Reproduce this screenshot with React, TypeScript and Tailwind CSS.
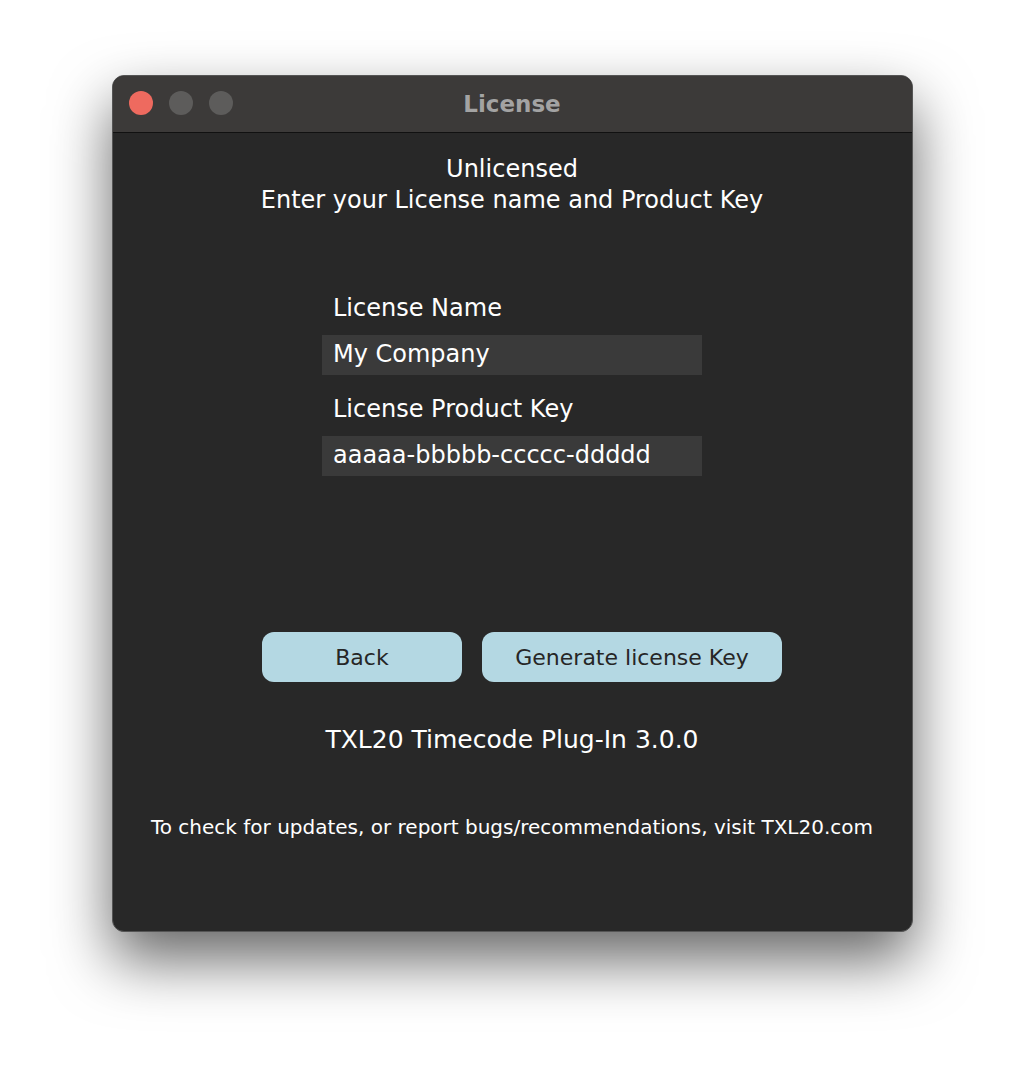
import React from 'react';

const font = { fontFamily: '"DejaVu Sans", "Noto Sans", sans-serif' };

const App = () => {
  return (
    <div className="w-[1024px] h-[1080px] bg-white flex justify-center pt-[75px]" style={font}>
      <div className="w-[801px] h-[857px] rounded-[12px] bg-[#282828] border border-[#555] shadow-[0_28px_60px_rgba(0,0,0,0.6)] overflow-hidden flex flex-col">
        {/* title bar */}
        <div className="relative h-[57px] bg-[#3c3a39] border-b border-[#111] flex items-center justify-center shrink-0">
          <div className="absolute left-[16px] top-[15px] flex gap-[16px]">
            <span className="w-[24px] h-[24px] rounded-full bg-[#ee6a5f]" />
            <span className="w-[24px] h-[24px] rounded-full bg-[#5d5c5b]" />
            <span className="w-[24px] h-[24px] rounded-full bg-[#5d5c5b]" />
          </div>
          <span className="text-[23px] font-bold text-[#a3a3a3]">License</span>
        </div>

        {/* body */}
        <div className="flex flex-col items-center text-white">
          <div className="mt-[21px] text-center text-[24px] leading-[31px]">
            <div>Unlicensed</div>
            <div>Enter your License name and Product Key</div>
          </div>

          <div className="mt-[76px] w-[380px] flex flex-col">
            <label className="pl-[11px] text-[24px] leading-[32px]">License Name</label>
            <div className="mt-[11px] h-[40px] bg-[#3a3a3a] pl-[11px] flex items-center text-[24px] leading-[32px] pb-[3px]">My Company</div>
            <label className="mt-[18px] pl-[11px] text-[24px] leading-[32px]">License Product Key</label>
            <div className="mt-[11px] h-[40px] bg-[#3a3a3a] pl-[11px] flex items-center text-[24px] leading-[32px] pb-[3px]">aaaaa-bbbbb-ccccc-ddddd</div>
          </div>

          <div className="mt-[156px] ml-[20px] flex gap-[20px]">
            <button className="w-[200px] h-[50px] rounded-[12px] bg-[#b4d8e3] text-[#262626] text-[22px]">Back</button>
            <button className="w-[300px] h-[50px] rounded-[12px] bg-[#b4d8e3] text-[#262626] text-[22px]">Generate license Key</button>
          </div>

          <div className="mt-[42px] text-[25px] leading-[32px]">TXL20 Timecode Plug-In 3.0.0</div>

          <div className="mt-[57px] text-[20px] leading-[28px]">To check for updates, or report bugs/recommendations, visit TXL20.com</div>
        </div>
      </div>
    </div>
  );
};

export default App;
